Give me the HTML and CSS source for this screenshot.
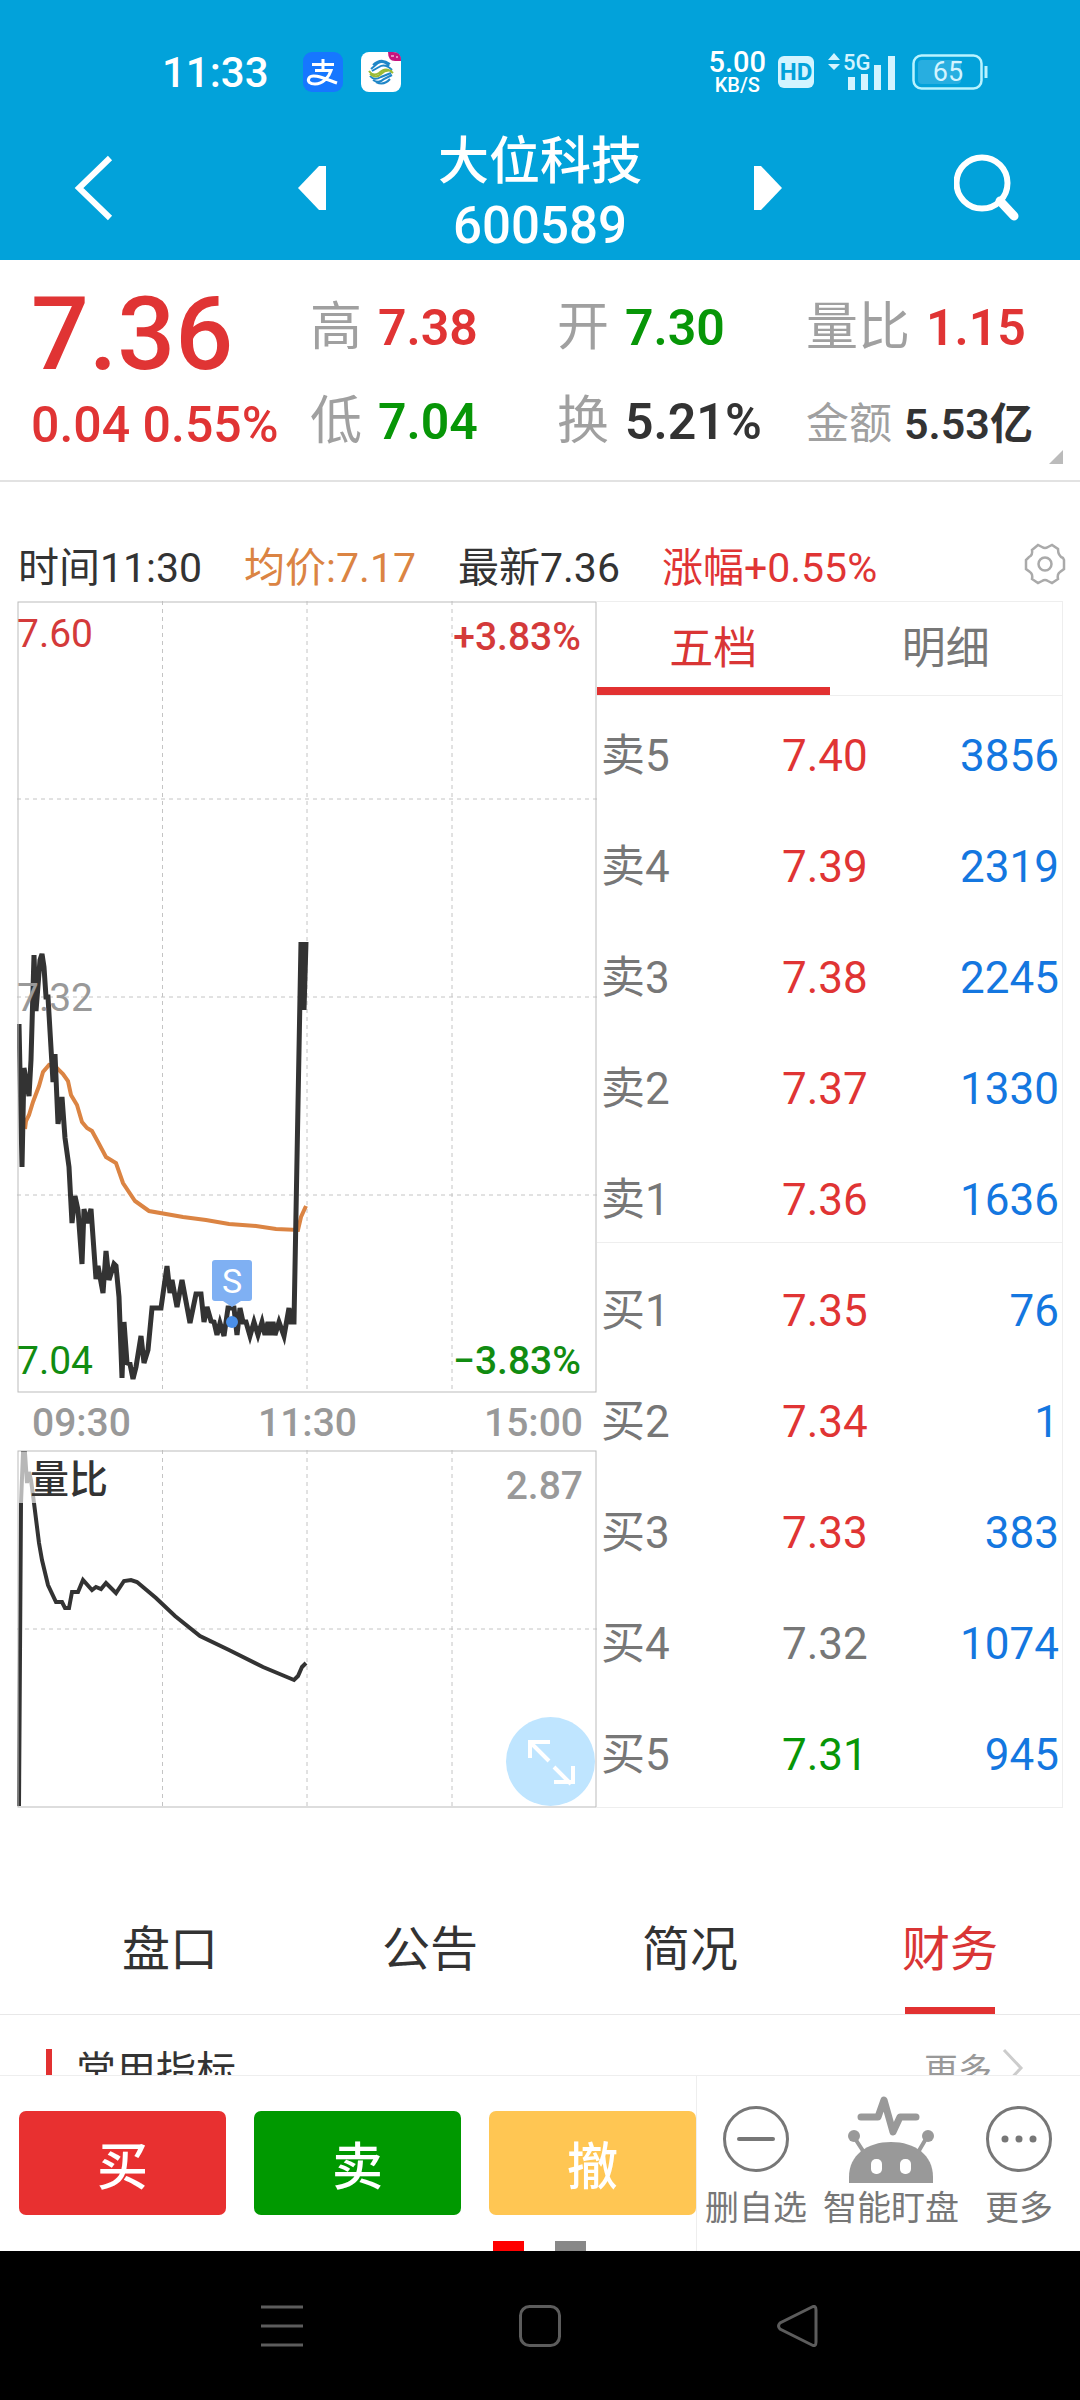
FILE: index.html
```html
<!DOCTYPE html>
<html lang="zh-CN">
<head>
  <meta charset="UTF-8" />
  <meta name="viewport" content="width=device-width, initial-scale=1.0" />
  <title>大位科技 600589</title>
  <link rel="stylesheet" href="styles.css">
</head>
<body>
<header class="header">
  <div class="status">
    <div class="status__left">
      <span class="status__time">11:33</span>
      <svg class="status__app" viewBox="0 0 40 40">
        <rect width="40" height="40" rx="9" fill="#1677ff" />
        <path d="M9 12.500H31M20 7V18M12 18.500H28C26 25 20 32 12 32C7 32 4 29.500 6 26C9 21 20 26 34 31" fill="none" stroke="#fff" stroke-width="3" />
      </svg>
      <svg class="status__app" viewBox="0 0 40 40">
        <rect width="40" height="40" rx="8" fill="#fff" />
        <path d="M27 0H32Q40 0 40 8V9H34Q27 9 27 0Z" fill="#c4157f" />
        <path d="M30 4H33M35 5H37" stroke="#fff" />
        <g fill="none" stroke-width="2">
          <path d="M12 13Q20 5 29 12M10 17L17 11Q23 8 28 14M11 19L18 15Q24 11 31 18M9 24Q13 29 20 25L30 21M12 28Q18 32 23 27L31 23M15 30Q23 34 29 27" stroke="#1f86c7" />
          <path d="M8 19Q12 25 18 21Q25 14 32 21M9 22Q15 27 20 22Q25 17 31 19" stroke="#9aba35" />
        </g>
      </svg>
    </div>
    <div class="status__right">
      <div class="status__speed"><span class="status__rate">5.00</span><span>KB/S</span></div>
      <span class="status__hd">HD</span>
      <svg class="status__signal" viewBox="0 0 68 40">
        <path d="M0 8L6 1L12 8ZM0 12H12L6 18Z" />
        <text x="15" y="18">5G</text>
        <path d="M20 25h7v13h-7zM33 22h7v16h-7zM46 13h7v25h-7zM60 4h7v34h-7z" />
      </svg>
      <svg class="status__battery" viewBox="0 0 76 36">
        <rect x="6" y="6" width="43" height="24" rx="4" fill="#28aee0" />
        <rect x="1.500" y="1.500" width="68" height="33" rx="8" fill="none" stroke="#b9f3ff" stroke-width="2.500" />
        <path d="M74 12V24" stroke="#b9f3ff" stroke-width="3" />
        <text x="36" y="27" text-anchor="middle">65</text>
      </svg>
    </div>
  </div>
  <nav class="nav">
    <a class="nav__back" href="#" aria-label="返回">
      <svg width="40" height="66" viewBox="0 0 40 66"><path d="M36 3L5 33L36 63" fill="none" stroke="#fff" stroke-width="6" /></svg>
    </a>
    <button class="nav__arrow" aria-label="上一只"><svg width="28" height="44" viewBox="0 0 28 44"><path d="M28 0V44H21L0 22L21 0Z" /></svg></button>
    <h1 class="nav__title"><span>大位科技</span><span class="nav__code">600589</span></h1>
    <button class="nav__arrow" aria-label="下一只"><svg width="28" height="44" viewBox="0 0 28 44"><path d="M0 0V44H7L28 22L7 0Z" /></svg></button>
    <button class="nav__search" aria-label="搜索">
      <svg width="66" height="68" viewBox="0 0 66 68" fill="none" stroke="#fff"><circle cx="28" cy="29" r="25.500" stroke-width="6" /><path d="M46 47L60 62" stroke-width="9" stroke-linecap="round" /></svg>
    </button>
  </nav>
</header>

<main class="main">
  <section class="quote">
    <div class="quote__price up">7.36</div>
    <div class="quote__item"><span class="quote__label">高</span><b class="up">7.38</b></div>
    <div class="quote__item"><span class="quote__label">开</span><b class="down">7.30</b></div>
    <div class="quote__item"><span class="quote__label">量比</span><b class="up">1.15</b></div>
    <div class="quote__change up">0.04 0.55%</div>
    <div class="quote__item"><span class="quote__label">低</span><b class="down">7.04</b></div>
    <div class="quote__item"><span class="quote__label">换</span><b>5.21%</b></div>
    <div class="quote__item quote__item--small"><span class="quote__label">金额</span><b>5.53亿</b></div>
    <i class="quote__more"></i>
  </section>

  <section class="info">
    <span>时间11:30</span>
    <span class="average">均价:7.17</span>
    <span>最新7.36</span>
    <span class="up">涨幅+0.55%</span>
    <button class="info__setting" aria-label="设置">
      <svg width="42" height="42" viewBox="0 0 42 42" fill="none" stroke="#aaa" stroke-width="2.500">
        <path d="M8 7L14 2L18 4Q21 6 24 4L28 2L34 6Q34 13 39 15L40 17V26L36 29Q33 31 34 36L28 40L24 38Q21 36 18 38L14 40L8 36Q9 31 6 29L2 26V17L5 14Q9 12 8 7Z" />
        <circle cx="21" cy="21" r="6.500" />
      </svg>
    </button>
  </section>

  <section class="market">
    <div class="charts">
      <svg class="chart" viewBox="0 0 580 792">
        <path class="chart__grid" d="M145.500 0V792M290 0V792M435 0V792M0 198H580M0 396H580M0 594H580" />
        <polyline class="chart__average" points="8,528 9,520 12,514 16,501 22,485 26,471 32,464 38,465 46,473 51,480 54,494 60,504 65,521 70,527 75,530 81,541 89,556 99,562 106,582 118,600 132,610 166,616 189,619 212,623 239,625 259,628 281,629 284,616 289,605" />
        <polyline class="chart__line" points="2,423 5,566 7,467 12,495 14,459 17,354 19,410 23,359 25,353 27,366 29,396 31,396 36,481 38,453 41,523 45,496 48,537 52,566 55,622 58,595 61,609 65,663 67,608 70,622 74,608 79,678 81,665 86,692 89,650 92,679 97,663 99,665 102,696 105,777 107,721 110,762 113,763 116,778 119,766 124,735 127,762 131,749 135,707 144,707 150,665 153,692 155,679 160,706 165,679 173,722 179,693 184,693 187,721 190,706 194,720 197,721 200,734 203,722 207,735 211,707 217,707 220,734 223,707 226,721 229,721 233,735 237,721 241,734 245,721 248,734 251,721 253,734 256,721 258,734 262,721 267,735 272,707 274,721 277,721 284,341 287,409 289,341" />
        <rect class="chart__frame" x="1" y="1" width="578" height="790" />
        <g class="chart__mark">
          <path d="M198 659H232Q235 659 235 662V697Q235 700 232 700H224L215 706L206 700H198Q195 700 195 697V662Q195 659 198 659Z" />
          <circle cx="215" cy="721" r="6" />
          <text x="215" y="692" text-anchor="middle">S</text>
        </g>
        <text class="chart__up" x="0" y="46">7.60</text>
        <text class="chart__flat" x="0" y="410">7.32</text>
        <text class="chart__down" x="0" y="773">7.04</text>
        <text class="chart__up chart__strong" x="564" y="49" text-anchor="end">+3.83%</text>
        <text class="chart__down chart__strong" x="564" y="773" text-anchor="end">−3.83%</text>
      </svg>
      <div class="times"><span>09:30</span><span>11:30</span><span>15:00</span></div>
      <div class="ratio">
        <svg class="chart" viewBox="0 0 580 358">
          <path class="chart__grid" d="M145.500 0V358M290 0V358M435 0V358M0 179H580" />
          <polyline class="chart__ratio" points="2,356 4,53 6,3 8,3 10,33 12,22 14,30 17,53 22,93 25,110 31,135 39,152 45,152 48,158 52,158 55,142 61,142 66,130 75,140 79,137 84,139 89,133 99,143 107,131 114,130 120,132 139,148 158,166 183,186 212,200 246,217 277,230 281,226 285,217 289,213" />
          <rect x="2" y="2" width="130" height="51" fill="#fff" fill-opacity="0.650" />
          <rect class="chart__frame" x="1" y="1" width="578" height="356" />
          <text class="chart__name" x="13" y="43">量比</text>
          <text class="chart__value" x="566" y="49" text-anchor="end">2.87</text>
        </svg>
        <button class="ratio__expand" aria-label="全屏">
          <svg width="48" height="48" viewBox="0 0 48 48" fill="none" stroke="#fff" stroke-width="4"><path d="M3 20V4H23M4 5L22 23M27 29L44 46M46 28V44H27" /></svg>
        </button>
      </div>
    </div>

    <div class="book">
      <div class="book__tabs">
        <button class="book__tab book__tab--active">五档</button>
        <button class="book__tab">明细</button>
      </div>
      <table class="book__table">
        <tbody class="book__sell">
          <tr><th>卖5</th><td class="up">7.40</td><td>3856</td></tr>
          <tr><th>卖4</th><td class="up">7.39</td><td>2319</td></tr>
          <tr><th>卖3</th><td class="up">7.38</td><td>2245</td></tr>
          <tr><th>卖2</th><td class="up">7.37</td><td>1330</td></tr>
          <tr><th>卖1</th><td class="up">7.36</td><td>1636</td></tr>
        </tbody>
        <tbody>
          <tr><th>买1</th><td class="up">7.35</td><td>76</td></tr>
          <tr><th>买2</th><td class="up">7.34</td><td>1</td></tr>
          <tr><th>买3</th><td class="up">7.33</td><td>383</td></tr>
          <tr><th>买4</th><td class="flat">7.32</td><td>1074</td></tr>
          <tr><th>买5</th><td class="down">7.31</td><td>945</td></tr>
        </tbody>
      </table>
    </div>
  </section>

  <nav class="tabs">
    <a href="#">盘口</a>
    <a href="#">公告</a>
    <a href="#">简况</a>
    <a class="tabs__active" href="#">财务</a>
  </nav>

  <section class="finance">
    <h2 class="finance__title">常用指标</h2>
    <a class="finance__more" href="#">更多
      <svg width="22" height="40" viewBox="0 0 22 40"><path d="M2 2L19 20L2 38" fill="none" stroke="#ccc" stroke-width="3" /></svg>
    </a>
  </section>
</main>

<footer class="footer">
  <div class="trade">
    <button class="trade__btn trade__btn--buy">买</button>
    <button class="trade__btn trade__btn--sell">卖</button>
    <button class="trade__btn trade__btn--cancel">撤</button>
    <div class="trade__dots"><i class="on"></i><i></i></div>
  </div>
  <div class="actions">
    <button class="actions__item">
      <svg viewBox="0 0 88 88" fill="none" stroke="#777" stroke-width="3"><circle cx="44" cy="44" r="31.500" /><path d="M27 44H61" stroke-width="4" stroke-linecap="round" /></svg>
      删自选
    </button>
    <button class="actions__item">
      <svg viewBox="0 0 88 88">
        <path d="M14 22H31L37 5L46 37L53 22H69" fill="none" stroke="#999" stroke-width="7" stroke-linecap="round" stroke-linejoin="round" />
        <path d="M7 42L18 59M80 42L70 59" stroke="#999" stroke-width="4" />
        <circle cx="7" cy="41" r="6" fill="#999" /><circle cx="81" cy="41" r="6" fill="#999" />
        <path d="M2 88V82C2 60 20 47 44 47S86 60 86 82V88Z" fill="#999" />
        <rect x="24" y="64" width="11" height="15" rx="5" fill="#fff" /><rect x="53" y="64" width="11" height="15" rx="5" fill="#fff" />
      </svg>
      智能盯盘
    </button>
    <button class="actions__item">
      <svg viewBox="0 0 88 88"><circle cx="44" cy="44" r="31.500" fill="none" stroke="#777" stroke-width="3" /><g fill="#777"><circle cx="30" cy="44" r="3.500" /><circle cx="44" cy="44" r="3.500" /><circle cx="58" cy="44" r="3.500" /></g></svg>
      更多
    </button>
  </div>
</footer>

<div class="system">
  <button aria-label="最近任务"><svg width="42" height="42" viewBox="0 0 42 42"><path d="M0 2H42M0 21H42M0 40H42" /></svg></button>
  <button aria-label="主屏幕"><svg width="42" height="42" viewBox="0 0 42 42"><rect x="1.500" y="1.500" width="39" height="39" rx="9" /></svg></button>
  <button aria-label="返回"><svg width="42" height="42" viewBox="0 0 42 42"><path d="M35 2Q39 0 39 5V37Q39 42 35 40L3 24Q0 21 3 18Z" /></svg></button>
</div>
</body>
</html>
```
FILE: styles.css
```css
* {
  box-sizing: border-box;
}
body {
  margin: 0;
  height: 100vh;
  display: flex;
  flex-direction: column;
  background: #fff;
  color: #333;
  font-family: Roboto, "Noto Sans CJK SC", sans-serif;
  font-size: 41px;
}
button {
  padding: 0;
  border: none;
  background: none;
  color: inherit;
  font-family: inherit;
  font-size: inherit;
}
a {
  color: inherit;
  text-decoration: none;
}
svg {
  display: block;
}
.up {
  color: #e03434;
}
.down {
  color: #079607;
}
.flat {
  color: #777;
}
.average {
  color: #db8443;
}

/* header */
.header {
  flex: none;
  height: 260px;
  background: #02a2da;
  color: #fff;
}
.status {
  display: flex;
  justify-content: space-between;
  height: 116px;
  padding: 28px 92px 0 162px;
}
.status__left,
.status__right {
  display: flex;
  align-items: center;
}
.status__time {
  font-size: 42px;
  font-weight: 500;
  margin-right: 16px;
}
.status__app {
  width: 40px;
  height: 40px;
  margin-left: 18px;
}
.status__speed {
  display: flex;
  flex-direction: column;
  align-items: center;
  font-size: 20px;
  font-weight: 500;
  line-height: 20px;
}
.status__rate {
  font-size: 29px;
  line-height: 26px;
}
.status__hd {
  width: 36px;
  margin-left: 12px;
  border-radius: 6px;
  background: #d3f4ff;
  color: #02a2da;
  font-size: 24px;
  font-weight: 700;
  line-height: 32px;
  text-align: center;
}
.status__signal {
  width: 68px;
  height: 40px;
  margin-left: 14px;
  overflow: visible;
  fill: #d3f4ff;
  font-size: 22px;
  font-weight: 500;
}
.status__battery {
  width: 76px;
  height: 36px;
  margin-left: 16px;
  fill: #d3f4ff;
  font-size: 27px;
}
.nav {
  display: flex;
  align-items: center;
  justify-content: space-between;
  height: 144px;
  padding: 0 60px 0 74px;
}
.nav__arrow {
  fill: #fff;
}
.nav__back {
  margin-right: 72px;
}
.nav__search {
  margin-left: 60px;
}
.nav__title {
  display: flex;
  flex-direction: column;
  align-items: center;
  margin: 0;
  padding-top: 12px;
  font-size: 51px;
  font-weight: 500;
  line-height: 64px;
}

/* quote */
.quote {
  position: relative;
  display: grid;
  grid-template-columns: 279fr 247fr 249fr 274fr;
  grid-template-rows: 94px 94px;
  align-items: center;
  padding: 21px 0 11px 31px;
  height: 222px;
  border-bottom: 2px solid #e2e2e2;
  white-space: nowrap;
}
.quote__price {
  padding-top: 12px;
  font-size: 102px;
  font-weight: 500;
  line-height: 94px;
}
.quote__change {
  padding-top: 6px;
  font-size: 50px;
  font-weight: 500;
}
.quote__item {
  display: flex;
  align-items: center;
  gap: 16px;
  font-size: 52px;
  line-height: 60px;
}
.quote__item b {
  font-weight: 600;
  font-size: 50px;
}
.quote__label {
  color: #a0a0a0;
}
.quote__item--small,
.quote__item--small b {
  font-size: 43px;
}
.quote__item--small {
  gap: 12px;
  padding-top: 4px;
}
.quote__more {
  position: absolute;
  right: 17px;
  bottom: 16px;
  border-left: 14px solid transparent;
  border-bottom: 14px solid #bbb;
}

/* time / average / latest */
.info {
  display: flex;
  align-items: center;
  gap: 42px;
  height: 79px;
  margin-top: 40px;
  padding: 4px 14px 0 18px;
}
.info__setting {
  margin-left: auto;
}

/* charts */
.market {
  display: grid;
  grid-template-columns: 580fr 466fr;
  padding: 0 17px;
}
.chart {
  width: 100%;
  height: auto;
}
.chart__grid {
  fill: none;
  stroke: #c4c4c4;
  stroke-width: 1;
  stroke-dasharray: 4 4;
}
.chart__frame {
  fill: none;
  stroke: #bbb;
  stroke-width: 1;
}
.chart__line,
.chart__ratio,
.chart__average {
  fill: none;
  stroke: #333;
  stroke-width: 5;
}
.chart__ratio,
.chart__average {
  stroke-width: 4;
}
.chart__average {
  stroke: #db8443;
}
.chart text {
  font-size: 39px;
}
.chart__up {
  fill: #d43a3a;
}
.chart__down {
  fill: #118c11;
}
.chart__flat,
.chart__value {
  fill: #999;
}
.chart__strong,
.chart__value,
.chart__name {
  font-weight: 500;
}
.chart__name {
  fill: #333;
}
.chart__mark {
  fill: #7fb0f3;
}
.chart__mark circle {
  fill: #4a8fe8;
}
.chart .chart__mark text {
  fill: #fff;
  font-size: 34px;
}
.times {
  display: flex;
  justify-content: space-between;
  padding: 3px 14px 0 15px;
  color: #999;
  font-weight: 500;
  font-size: 39px;
  line-height: 54px;
}
.ratio {
  position: relative;
}
.ratio__expand {
  position: absolute;
  right: 2px;
  bottom: 2px;
  display: flex;
  align-items: center;
  justify-content: center;
  width: 89px;
  height: 89px;
  border-radius: 50%;
  background: #bfe5ff;
}

/* order book */
.book {
  border: 1px solid #eee;
  border-left: none;
}
.book__tabs {
  display: flex;
  height: 94px;
  border-bottom: 1px solid #eee;
}
.book__tab {
  flex: 1;
  border-bottom: 8px solid transparent;
  color: #777;
  font-size: 44px;
}
.book__tab--active {
  border-color: #e23131;
  color: #d93535;
}
.book__table {
  width: 100%;
  border-collapse: collapse;
  font-size: 44px;
  line-height: 52px;
}
.book__table tr {
  height: 111px;
}
.book__sell tr:first-child {
  height: 102px;
}
.book__sell {
  border-bottom: 1px solid #eee;
}
.book__table th,
.book__table td {
  padding: 0 0 16px;
  vertical-align: bottom;
  text-align: center;
}
.book__table th {
  width: 33%;
  padding-left: 4px;
  color: #777;
  font-weight: 400;
  text-align: left;
}
.book__table td:last-child {
  width: 35%;
  padding-right: 3px;
  color: #1477e0;
  text-align: right;
}

/* bottom tabs */
.tabs {
  display: flex;
  height: 134px;
  margin-top: 73px;
  padding-left: 40px;
  border-bottom: 1px solid #e8e8e8;
  font-size: 48px;
  line-height: 138px;
}
.tabs a {
  position: relative;
  flex: 1;
  text-align: center;
}
.tabs__active {
  color: #d93535;
}
.tabs__active::after {
  content: "";
  position: absolute;
  left: 50%;
  bottom: 0;
  width: 90px;
  height: 7px;
  margin-left: -45px;
  background: #e23131;
}
.finance {
  display: flex;
  align-items: center;
  justify-content: space-between;
  padding: 24px 56px 0 46px;
}
.finance__title {
  display: flex;
  align-items: center;
  margin: 0;
  font-size: 40px;
  font-weight: 400;
}
.finance__title::before {
  content: "";
  width: 6px;
  height: 38px;
  margin-right: 24px;
  background: #e23131;
}
.finance__more {
  display: flex;
  align-items: center;
  gap: 10px;
  color: #999;
  font-size: 34px;
}
.main {
  flex: 1;
  min-height: 0;
  overflow: hidden;
}

/* trade bar */
.footer {
  flex: none;
  display: grid;
  grid-template-columns: 697fr 383fr;
  height: 176px;
  border-top: 1px solid #eee;
}
.trade {
  position: relative;
  display: flex;
  gap: 28px;
  padding: 35px 0 36px 19px;
  border-right: 1px solid #eee;
}
.trade__btn {
  flex: 1;
  border-radius: 7px;
  color: #fff;
  font-size: 51px;
  font-weight: 500;
}
.trade__btn--buy {
  background: #e83030;
}
.trade__btn--sell {
  background: #009900;
}
.trade__btn--cancel {
  background: #ffc653;
}
.trade__dots {
  position: absolute;
  right: 110px;
  bottom: 0;
  display: flex;
  gap: 31px;
}
.trade__dots i {
  width: 31px;
  height: 10px;
  background: #888;
}
.trade__dots .on {
  background: #f00;
}
.actions {
  display: flex;
  justify-content: space-between;
  padding: 19px 17px 0 8px;
}
.actions__item {
  display: flex;
  flex-direction: column;
  align-items: center;
  color: #777;
  font-size: 34px;
  line-height: 50px;
}
.actions__item svg {
  width: 88px;
  height: 88px;
}

/* system bar */
.system {
  flex: none;
  display: flex;
  align-items: center;
  justify-content: space-around;
  height: 149px;
  padding: 0 153px;
  background: #000;
}
.system svg {
  fill: none;
  stroke: #5c5c5c;
  stroke-width: 3;
}
```
